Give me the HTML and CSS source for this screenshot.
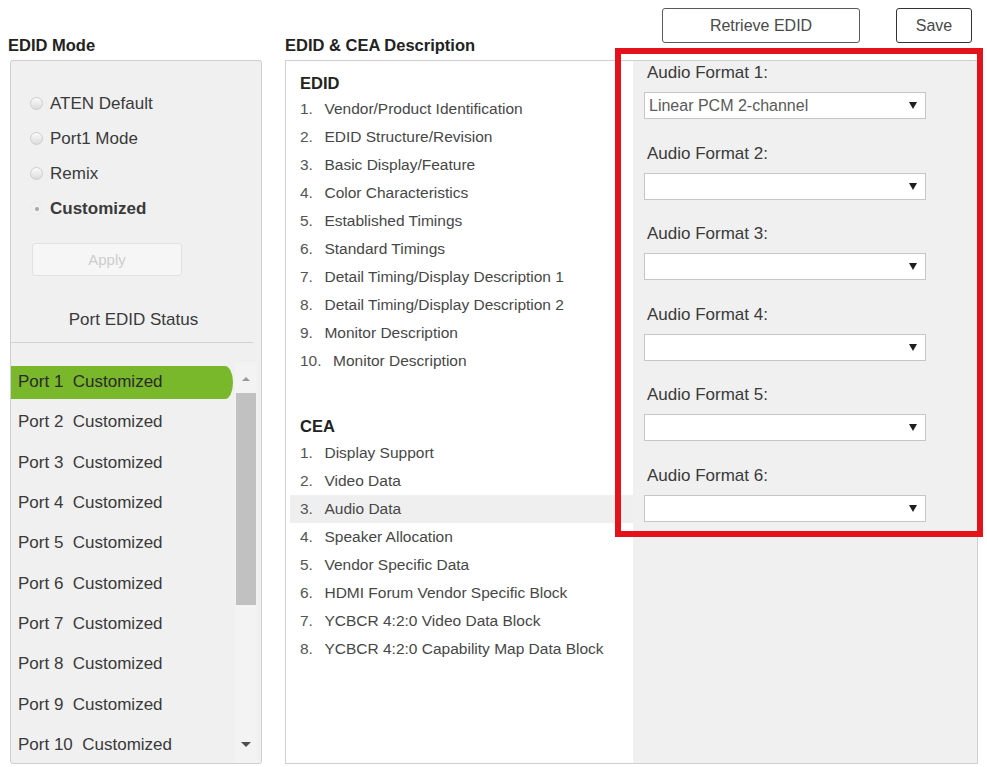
FILE: index.html
```html
<!DOCTYPE html>
<html lang="en">
<head>
<meta charset="utf-8">
<title>EDID Settings</title>
<link rel="stylesheet" href="styles.css">
</head>
<body>
<div class="page">
  <div class="top">
    <div class="h h-mode">EDID Mode</div>
    <div class="h h-desc">EDID &amp; CEA Description</div>
    <div class="btns">
      <button class="btn btn-retrieve">Retrieve EDID</button>
      <button class="btn btn-save">Save</button>
    </div>
  </div>
  <div class="main">
    <div class="mode-panel">
      <div class="radios">
        <div class="radio"><span class="circle"></span><span>ATEN Default</span></div>
        <div class="radio"><span class="circle"></span><span>Port1 Mode</span></div>
        <div class="radio"><span class="circle"></span><span>Remix</span></div>
        <div class="radio checked"><span class="circle"></span><span>Customized</span></div>
      </div>
      <div class="apply">Apply</div>
      <div class="status-title">Port EDID Status</div>
      <div class="divider"></div>
      <div class="ports">
        <div class="port-list">
          <div class="port active"><div class="pill">Port 1&nbsp; Customized</div></div>
          <div class="port"><div class="pill">Port 2&nbsp; Customized</div></div>
          <div class="port"><div class="pill">Port 3&nbsp; Customized</div></div>
          <div class="port"><div class="pill">Port 4&nbsp; Customized</div></div>
          <div class="port"><div class="pill">Port 5&nbsp; Customized</div></div>
          <div class="port"><div class="pill">Port 6&nbsp; Customized</div></div>
          <div class="port"><div class="pill">Port 7&nbsp; Customized</div></div>
          <div class="port"><div class="pill">Port 8&nbsp; Customized</div></div>
          <div class="port"><div class="pill">Port 9&nbsp; Customized</div></div>
          <div class="port"><div class="pill">Port 10&nbsp; Customized</div></div>
        </div>
        <div class="scroll">
          <div class="sb-up"><span class="tri-up"></span></div>
          <div class="thumb"></div>
          <div class="sb-space"></div>
          <div class="sb-down"><span class="tri-down"></span></div>
        </div>
      </div>
    </div>
    <div class="desc-panel">
      <div class="sec-title">EDID</div>
      <div class="item"><span class="n">1.</span>Vendor/Product Identification</div>
      <div class="item"><span class="n">2.</span>EDID Structure/Revision</div>
      <div class="item"><span class="n">3.</span>Basic Display/Feature</div>
      <div class="item"><span class="n">4.</span>Color Characteristics</div>
      <div class="item"><span class="n">5.</span>Established Timings</div>
      <div class="item"><span class="n">6.</span>Standard Timings</div>
      <div class="item"><span class="n">7.</span>Detail Timing/Display Description 1</div>
      <div class="item"><span class="n">8.</span>Detail Timing/Display Description 2</div>
      <div class="item"><span class="n">9.</span>Monitor Description</div>
      <div class="item"><span class="n">10.</span>Monitor Description</div>
      <div class="sec-title cea">CEA</div>
      <div class="item"><span class="n">1.</span>Display Support</div>
      <div class="item"><span class="n">2.</span>Video Data</div>
      <div class="item selected"><span class="n">3.</span>Audio Data</div>
      <div class="item"><span class="n">4.</span>Speaker Allocation</div>
      <div class="item"><span class="n">5.</span>Vendor Specific Data</div>
      <div class="item"><span class="n">6.</span>HDMI Forum Vendor Specific Block</div>
      <div class="item"><span class="n">7.</span>YCBCR 4:2:0 Video Data Block</div>
      <div class="item"><span class="n">8.</span>YCBCR 4:2:0 Capability Map Data Block</div>
    </div>
    <div class="audio-panel">
      <div class="group">
        <div class="label">Audio Format 1:</div>
        <div class="select"><span class="val">Linear PCM 2-channel</span><span class="tri-sel"></span></div>
      </div>
      <div class="group">
        <div class="label">Audio Format 2:</div>
        <div class="select"><span class="val"></span><span class="tri-sel"></span></div>
      </div>
      <div class="group">
        <div class="label">Audio Format 3:</div>
        <div class="select"><span class="val"></span><span class="tri-sel"></span></div>
      </div>
      <div class="group">
        <div class="label">Audio Format 4:</div>
        <div class="select"><span class="val"></span><span class="tri-sel"></span></div>
      </div>
      <div class="group">
        <div class="label">Audio Format 5:</div>
        <div class="select"><span class="val"></span><span class="tri-sel"></span></div>
      </div>
      <div class="group">
        <div class="label">Audio Format 6:</div>
        <div class="select"><span class="val"></span><span class="tri-sel"></span></div>
      </div>
    </div>
  </div>
  <div class="annot"></div>
</div>
</body>
</html>
```
FILE: styles.css
```css
* { box-sizing: border-box; }
html, body { margin: 0; padding: 0; background: #fff; }
body {
  font-family: "Liberation Sans", Arial, sans-serif;
  color: #333;
  width: 987px;
  height: 767px;
  overflow: hidden;
}
.page {
  position: relative;
  padding: 8px 9px 0 8px;
}
.top {
  display: flex;
  height: 52px;
  margin-right: 6px;
}
.h {
  padding-top: 28px;
  line-height: 18px;
  font-size: 16.5px;
  font-weight: bold;
  color: #222;
}
.h-mode { width: 277px; flex-shrink: 0; }
.h-desc { flex: 1; }
.btns {
  display: flex;
  gap: 36px;
}
.btn {
  height: 35px;
  background: #fff;
  border: 1px solid #5a5a5a;
  border-radius: 3px;
  font-family: "Liberation Sans", Arial, sans-serif;
  font-size: 16px;
  color: #4a4a4a;
  padding: 0;
}
.btn-retrieve { width: 198px; }
.btn-save { width: 76px; border-color: #333; }

.main {
  display: flex;
  width: 968px;
  height: 704px;
  margin-left: 2px;
}
.main > div { flex-shrink: 0; }
.mode-panel {
  width: 252px;
  background: #f0f0f0;
  border: 1px solid #cfcfcf;
  border-radius: 3px;
  padding-top: 25px;
  margin-right: 23px;
  display: flex;
  flex-direction: column;
  overflow: hidden;
}
.radios { padding-left: 19px; }
.radio {
  height: 35px;
  display: flex;
  align-items: center;
  font-size: 17px;
  color: #3a3a3a;
}
.circle {
  width: 13px;
  height: 13px;
  border-radius: 50%;
  border: 1px solid #cdcdcd;
  background: linear-gradient(#fafafa, #dcdcdc);
  margin-right: 7px;
  display: flex;
  align-items: center;
  justify-content: center;
}
.radio.checked { font-weight: bold; }
.radio.checked .circle {
  border-color: #ececec;
  background: #f0f0f0;
}
.radio.checked .circle::after {
  content: "";
  width: 4px;
  height: 4px;
  border-radius: 50%;
  background: #a8a8a8;
}
.apply {
  margin: 17px 0 0 21px;
  width: 150px;
  height: 33px;
  border: 1px solid #e2e2e2;
  border-radius: 3px;
  background: #f6f6f6;
  color: #cdcdcd;
  font-size: 15px;
  display: flex;
  align-items: center;
  justify-content: center;
}
.status-title {
  margin-top: 34px;
  line-height: 20px;
  font-size: 17px;
  text-align: center;
  padding-right: 5px;
  color: #3a3a3a;
}
.divider {
  margin-top: 12px;
  height: 1px;
  background: #d2d2d2;
  margin-right: 8px;
}
.ports {
  margin-top: 19px;
  display: flex;
  flex: 1;
  overflow: hidden;
}
.port-list { width: 222px; }
.port {
  height: 40.3px;
  display: flex;
  align-items: center;
}
.pill {
  flex: 1;
  height: 33px;
  display: flex;
  align-items: center;
  padding-left: 7px;
  font-size: 17px;
  color: #3a3a3a;
  white-space: nowrap;
}
.port.active .pill {
  background: #79b82b;
  border-radius: 0 8px 8px 0 / 0 16.5px 16.5px 0;
  color: #2a2a2a;
}
.scroll {
  width: 22px;
  margin-left: 2px;
  background: #f3f3f3;
  display: flex;
  flex-direction: column;
}
.sb-up {
  height: 31px;
  display: flex;
  justify-content: center;
  align-items: center;
  padding-top: 2px;
}
.tri-up {
  width: 0; height: 0;
  border-left: 4px solid transparent;
  border-right: 4px solid transparent;
  border-bottom: 4px solid #9a9a9a;
}
.thumb {
  height: 212px;
  margin: 0 1px;
  background: #c1c1c1;
}
.sb-space { flex: 1; }
.sb-down {
  height: 38px;
  display: flex;
  justify-content: center;
  align-items: center;
}
.tri-down {
  width: 0; height: 0;
  border-left: 5px solid transparent;
  border-right: 5px solid transparent;
  border-top: 5px solid #4f4f4f;
}

.desc-panel {
  width: 348px;
  background: #fff;
  border: 1px solid #cfcfcf;
  border-right: none;
  padding-top: 10px;
  padding-left: 4px;
}
.sec-title {
  line-height: 24px;
  padding-left: 10px;
  font-size: 16.5px;
  font-weight: bold;
  color: #222;
}
.sec-title.cea {
  margin-top: 38px;
  line-height: 26px;
}
.item {
  height: 28px;
  line-height: 28px;
  padding-left: 10px;
  font-size: 15.5px;
  color: #474747;
  white-space: nowrap;
}
.item .n {
  margin-right: 11.5px;
  color: #555;
}
.item.selected { background: #efefef; }

.audio-panel {
  width: 345px;
  background: #f0f0f0;
  border: 1px solid #cfcfcf;
  border-left: none;
  padding: 2px 0 0 11px;
}
.group { margin-bottom: 24.5px; }
.label {
  line-height: 20px;
  padding-left: 3px;
  font-size: 17px;
  color: #3a3a3a;
}
.select {
  margin-top: 9px;
  width: 282px;
  height: 27px;
  background: #fff;
  border: 1px solid #c6c6c6;
  display: flex;
  align-items: center;
  justify-content: space-between;
  padding: 0 8px 0 4px;
  font-size: 16px;
  color: #5a5a5a;
}
.tri-sel {
  width: 0; height: 0;
  border-left: 4px solid transparent;
  border-right: 4px solid transparent;
  border-top: 7px solid #1e1e1e;
}
.annot {
  position: absolute;
  left: 615px;
  top: 48px;
  width: 368px;
  height: 489px;
  border: 6px solid #e3121b;
  pointer-events: none;
}
```
